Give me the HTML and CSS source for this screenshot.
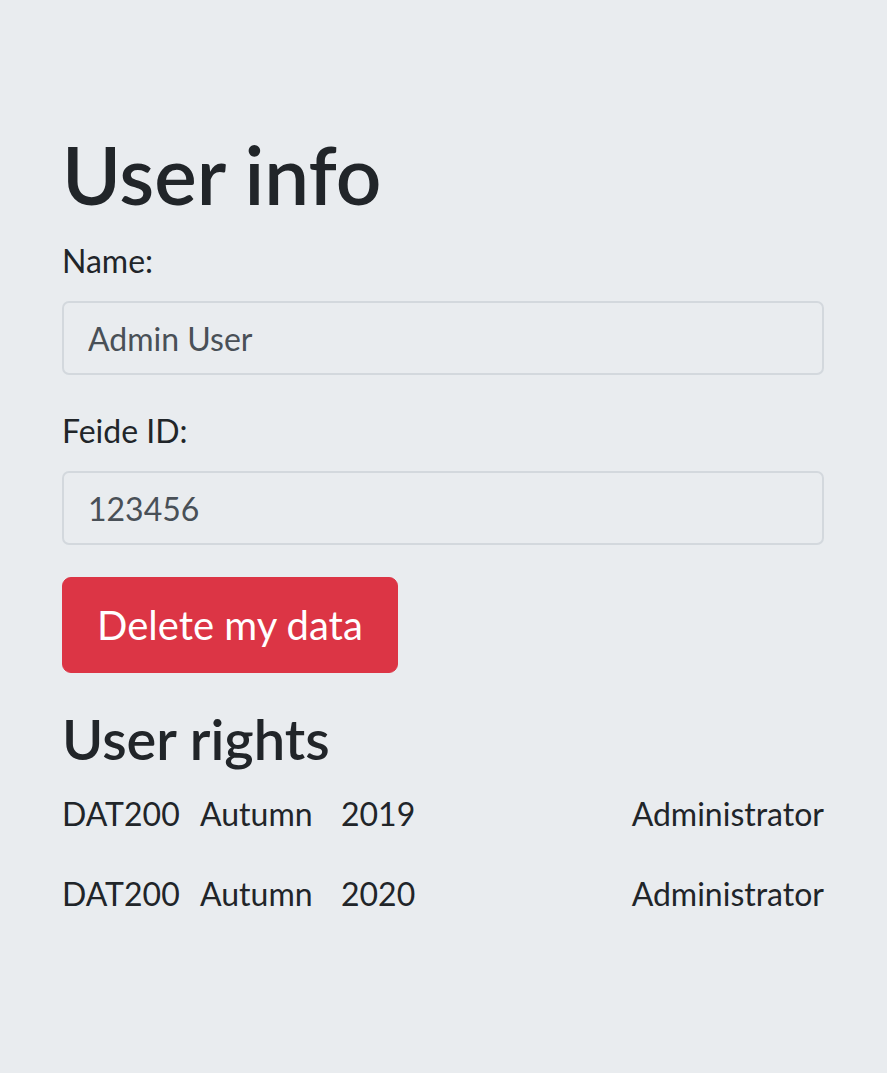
FILE: index.html
```html
<!DOCTYPE html>
<html lang="en">
<head>
<meta charset="utf-8">
<title>User info</title>
<link rel="stylesheet" href="styles.css">
</head>
<body>
<main class="container">
  <h1 class="title">User info</h1>
  <div class="form-group">
    <label class="label" for="name">Name:</label>
    <input class="input" id="name" type="text" value="Admin User" readonly>
  </div>
  <div class="form-group">
    <label class="label" for="feide">Feide ID:</label>
    <input class="input" id="feide" type="text" value="123456" readonly>
  </div>
  <button class="btn-danger" type="button">Delete my data</button>
  <h3 class="subtitle">User rights</h3>
  <div class="right-row">
    <span class="cell cell-course">DAT200</span>
    <span class="cell cell-term">Autumn</span>
    <span class="cell cell-year">2019</span>
    <span class="role">Administrator</span>
  </div>
  <div class="right-row">
    <span class="cell cell-course">DAT200</span>
    <span class="cell cell-term">Autumn</span>
    <span class="cell cell-year">2020</span>
    <span class="role">Administrator</span>
  </div>
</main>
</body>
</html>
```
FILE: styles.css
```css
html, body {
  margin: 0;
  padding: 0;
}
body {
  background: #e9ecef;
  color: #212529;
  font-family: "Segoe UI", Lato, "Noto Sans", sans-serif;
  font-size: 32px;
  line-height: 1.5;
}
.container {
  padding: 126px 63px 40px 62px;
}
.title {
  font-size: 80px;
  font-weight: 600;
  line-height: 1.2;
  margin: 0 0 15px;
}
.form-group {
  margin-bottom: 32px;
}
.label {
  display: inline-block;
  margin-bottom: 16px;
}
.input {
  display: block;
  box-sizing: border-box;
  width: 100%;
  height: 74px;
  padding: 12px 24px;
  font-family: inherit;
  font-size: 32px;
  line-height: 1.5;
  color: #495057;
  background: #e9ecef;
  border: 2px solid #d3d8dd;
  border-radius: 7px;
  outline: none;
}
.btn-danger {
  display: inline-block;
  font-family: inherit;
  font-size: 40px;
  line-height: 1.5;
  padding: 17px 34px;
  color: #fff;
  background: #dc3545;
  border: 1px solid #dc3545;
  border-radius: 9px;
  margin: 0 0 0 0;
}
.subtitle {
  font-size: 56px;
  font-weight: 600;
  line-height: 1.2;
  margin: 32px 0 18px;
}
.right-row {
  display: grid;
  grid-template-columns: 138px 141px auto 1fr;
  margin-bottom: 32px;
}
.role {
  justify-self: end;
}
```
